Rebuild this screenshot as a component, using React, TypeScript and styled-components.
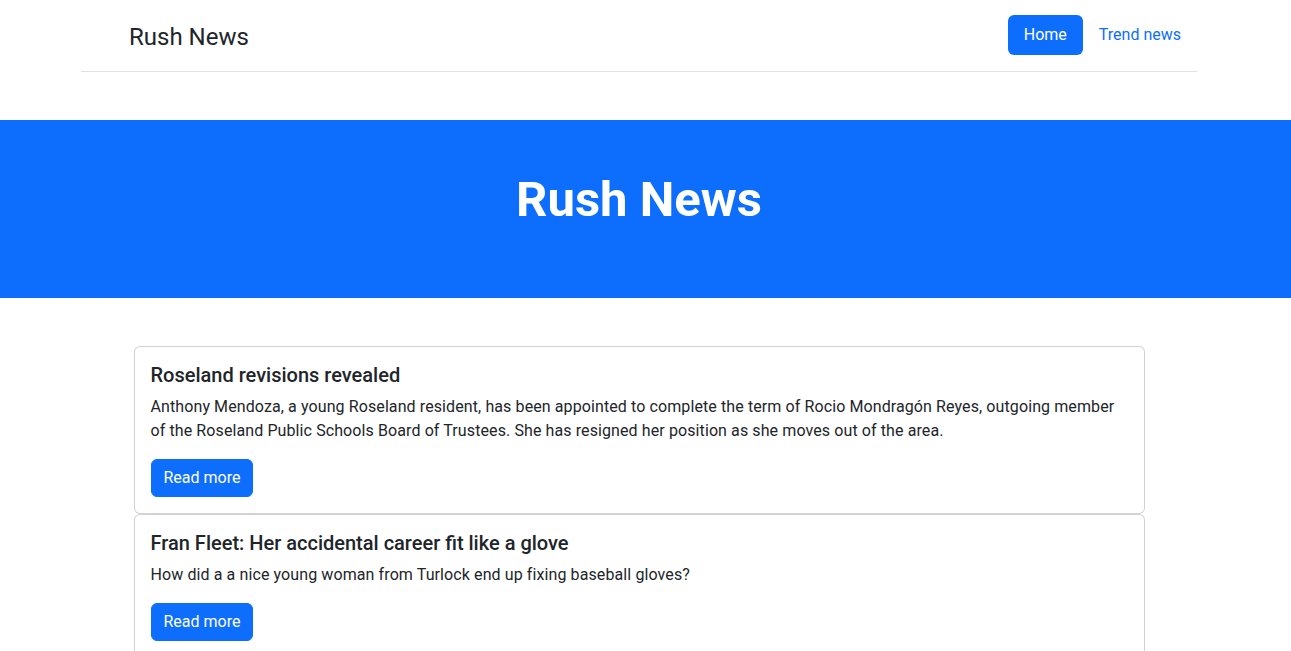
import React from "react";
import styled, { createGlobalStyle } from "styled-components";

const GlobalStyle = createGlobalStyle`
  * {
    box-sizing: border-box;
  }
  body {
    margin: 0;
    background: #fff;
    color: #212529;
    font-family: Roboto, "Liberation Sans", Arial, sans-serif;
    font-size: 16px;
    line-height: 1.5;
  }
`;

const primary = "#0d6efd";

// the reference was shot with a scrollbar, so the page is shifted a bit left
const Page = styled.div`
  padding-right: 13px;
`;

const Container = styled.div<{ $max?: number }>`
  max-width: ${({ $max }) => $max ?? 1140}px;
  margin: 0 auto;
  padding: 0 12px;
`;

const Header = styled.header`
  display: flex;
  align-items: center;
  padding: 15px 0 16px;
  margin-bottom: 48px;
  border-bottom: 1px solid #dee2e6;
`;

const Brand = styled.a`
  display: flex;
  align-items: center;
  margin-right: auto;
  padding-top: 4px;
  color: #212529;
  text-decoration: none;
  font-size: 24px;
  line-height: 36px;
`;

const BrandMark = styled.svg`
  width: 40px;
  height: 32px;
  margin-right: 8px;
`;

const Nav = styled.ul`
  display: flex;
  list-style: none;
  margin: 0;
  padding: 0;
`;

const NavLink = styled.a<{ $active?: boolean }>`
  display: block;
  padding: 8px 16px;
  border-radius: 6px;
  font-size: 16px;
  line-height: 24px;
  text-decoration: none;
  color: ${({ $active }) => ($active ? "#fff" : primary)};
  background: ${({ $active }) => ($active ? primary : "transparent")};
`;

const Hero = styled.section`
  margin: 0 -13px 48px 0;
  padding: 51px 13px 60px 0;
  background: ${primary};
  color: #fff;
  text-align: center;
`;

const HeroTitle = styled.h1`
  margin: 0 0 8px;
  font-size: 49px;
  font-weight: 700;
  line-height: 1.2;
`;

const CardList = styled.div`
  display: flex;
  flex-direction: column;
`;

const Card = styled.article`
  border: 1px solid rgba(0, 0, 0, 0.175);
  border-radius: 6px;
  padding: 16px;
  background: #fff;
`;

const CardTitle = styled.h5`
  margin: 0 0 8px;
  font-size: 20px;
  font-weight: 500;
  line-height: 24px;
`;

const CardText = styled.p`
  margin: 0 0 16px;
  letter-spacing: 0.1px;
`;

const Button = styled.a`
  display: inline-block;
  padding: 6px 12px;
  border: 1px solid ${primary};
  border-radius: 6px;
  background: ${primary};
  color: #fff;
  font-size: 16px;
  line-height: 24px;
  text-decoration: none;
`;

const news = [
  {
    title: "Roseland revisions revealed",
    text: "Anthony Mendoza, a young Roseland resident, has been appointed to complete the term of Rocio Mondragón Reyes, outgoing member of the Roseland Public Schools Board of Trustees. She has resigned her position as she moves out of the area.",
  },
  {
    title: "Fran Fleet: Her accidental career fit like a glove",
    text: "How did a a nice young woman from Turlock end up fixing baseball gloves?",
  },
];

export default function App() {
  return (
    <Page>
      <GlobalStyle />
      <Container>
        <Header>
          <Brand href="#">
            <BrandMark />
            <span>Rush News</span>
          </Brand>
          <Nav>
            <li>
              <NavLink href="#" $active>
                Home
              </NavLink>
            </li>
            <li>
              <NavLink href="#">Trend news</NavLink>
            </li>
          </Nav>
        </Header>
      </Container>

      <Hero>
        <HeroTitle>Rush News</HeroTitle>
      </Hero>

      <Container $max={1035}>
        <CardList>
          {news.map((item) => (
            <Card key={item.title}>
              <CardTitle>{item.title}</CardTitle>
              <CardText>{item.text}</CardText>
              <Button href="#">Read more</Button>
            </Card>
          ))}
        </CardList>
      </Container>
    </Page>
  );
}
